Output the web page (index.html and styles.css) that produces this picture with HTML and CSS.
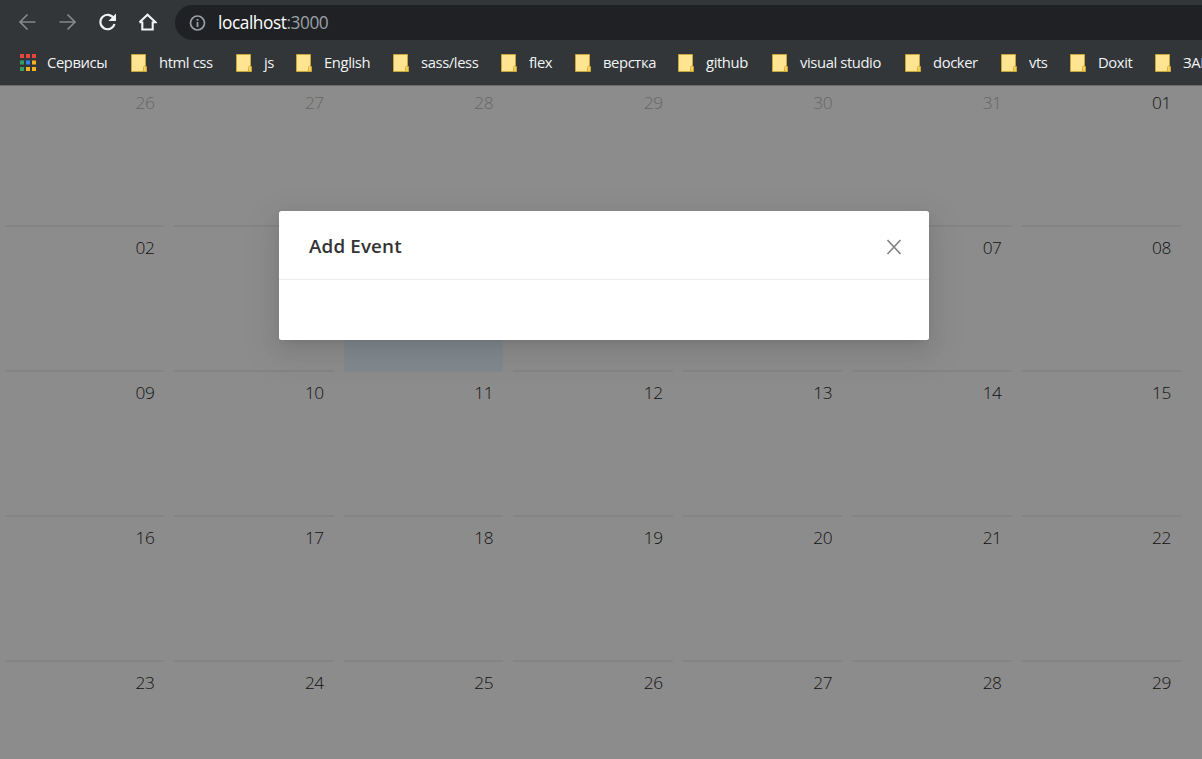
FILE: index.html
```
<!DOCTYPE html>
<html lang="en">
<head>
<meta charset="utf-8">
<title>Calendar</title>
<link rel="stylesheet" href="styles.css">
</head>
<body>
<svg class="defs" width="0" height="0">
  <symbol id="folder" viewBox="0 0 16 18">
    <path d="M.5.5h14v12h1v5H.5z" fill="#ffe591" stroke="#c9a63a"/>
    <path d="M12.500 17v-3.500q0-1.500 1.500-1.500" fill="none" stroke="#d9b13b"/>
    <path d="M13 17v-3l1-1h1v4z" fill="#f5cf5a"/>
  </symbol>
</svg>
<header class="browser">
  <div class="toolbar">
    <svg class="nav" viewBox="0 0 20 20"><path d="M18.500 10H3.500M10.500 2.500 3 10 10.500 17.500" class="dim"/></svg>
    <svg class="nav" viewBox="0 0 20 20"><path d="M2.500 10h15M10.500 2.500 18 10 10.500 17.500" class="dim"/></svg>
    <svg class="nav" viewBox="0 0 20 20"><path d="M16.700 6.200A7.200 7.200 0 1 0 17.500 12" class="bright"/><path d="M19 1.500V9H11.500z" fill="#f1f3f4"/></svg>
    <svg class="nav" viewBox="0 0 20 20"><path d="M5.300 9.500v8h10.400v-8M2.500 10.300 10.500 2.800l8 7.500h-2.800M2.500 10.300h2.800" class="bright"/></svg>
    <div class="address">
      <svg class="info" viewBox="0 0 18 18"><circle cx="8.500" cy="9" r="7" fill="none" stroke="#9aa0a6" stroke-width="1.700"/><path d="M8.500 8v5M8.500 5v1.800" stroke="#9aa0a6" stroke-width="1.800"/></svg>
      <span class="url">localhost<span class="port">:3000</span></span>
    </div>
  </div>
  <nav class="bookmarks">
    <a class="mark"><svg class="apps" viewBox="0 0 16 17"><path d="M0 0h4v4H0zM6 0h4v4H6zM12 0h4v4h-4z" fill="#e8453c"/><path d="M0 6.500h4v4H0zM0 13h4v4H0z" fill="#34a060"/><path d="M6 6.500h4v4H6z" fill="#2a85f0"/><path d="M12 6.500h4v4h-4zM6 13h4v4H6zM12 13h4v4h-4z" fill="#f5b324"/></svg><span>Сервисы</span></a>
    <a class="mark"><svg class="folder"><use href="#folder"/></svg><span>html css</span></a>
    <a class="mark"><svg class="folder"><use href="#folder"/></svg><span>js</span></a>
    <a class="mark"><svg class="folder"><use href="#folder"/></svg><span>English</span></a>
    <a class="mark"><svg class="folder"><use href="#folder"/></svg><span>sass/less</span></a>
    <a class="mark"><svg class="folder"><use href="#folder"/></svg><span>flex</span></a>
    <a class="mark"><svg class="folder"><use href="#folder"/></svg><span>верстка</span></a>
    <a class="mark"><svg class="folder"><use href="#folder"/></svg><span>github</span></a>
    <a class="mark"><svg class="folder"><use href="#folder"/></svg><span>visual studio</span></a>
    <a class="mark"><svg class="folder"><use href="#folder"/></svg><span>docker</span></a>
    <a class="mark"><svg class="folder"><use href="#folder"/></svg><span>vts</span></a>
    <a class="mark"><svg class="folder"><use href="#folder"/></svg><span>Doxit</span></a>
    <a class="mark"><svg class="folder"><use href="#folder"/></svg><span>ЗАК</span></a>
  </nav>
</header>
<main class="page">
  <div class="calendar">
    <div class="day first out">26</div><div class="day first out">27</div><div class="day first out">28</div><div class="day first out">29</div><div class="day first out">30</div><div class="day first out">31</div><div class="day first">01</div>
    <div class="day">02</div><div class="day"></div><div class="day selected"></div><div class="day"></div><div class="day"></div><div class="day">07</div><div class="day">08</div>
    <div class="day">09</div><div class="day">10</div><div class="day no-line">11</div><div class="day">12</div><div class="day">13</div><div class="day">14</div><div class="day">15</div>
    <div class="day">16</div><div class="day">17</div><div class="day">18</div><div class="day">19</div><div class="day">20</div><div class="day">21</div><div class="day">22</div>
    <div class="day">23</div><div class="day">24</div><div class="day">25</div><div class="day">26</div><div class="day">27</div><div class="day">28</div><div class="day">29</div>
  </div>
  <section class="modal">
    <div class="modal-head">
      <h1 class="title">Add Event</h1>
      <svg class="close" viewBox="0 0 16 16"><path d="M1.500 1 14.500 15M14.500 1 1.500 15"/></svg>
    </div>
    <div class="modal-body"></div>
  </section>
</main>
</body>
</html>
```

FILE: styles.css
```
* { box-sizing: border-box; }
body {
  margin: 0;
  height: 759px;
  overflow: hidden;
  display: flex;
  flex-direction: column;
  background: #8c8c8c;
  font-family: "Open Sans", "Noto Sans", sans-serif;
}
.defs { position: absolute; }
.browser {
  flex: none;
  height: 86px;
  background: #323639;
  border-bottom: 1px solid #6b6b6c;
  overflow: hidden;
}
.toolbar {
  height: 40px;
  padding: 5px 0 0 17px;
  display: flex;
  gap: 20px;
}
.nav { flex: none; width: 20px; height: 20px; margin-top: 7px; }
.dim { fill: none; stroke: #85888b; stroke-width: 1.7; }
.bright { fill: none; stroke: #f1f3f4; stroke-width: 2.1; }
.address {
  flex: 1;
  height: 35px;
  margin-left: -2px;
  padding-left: 14px;
  display: flex;
  align-items: center;
  gap: 11px;
  border-radius: 18px 0 0 18px;
  background: #202124;
}
.info { width: 18px; height: 18px; }
.url { color: #fff; font-size: 17.3px; letter-spacing: -0.44px; line-height: 34px; }
.port { color: #9aa0a6; }
.bookmarks {
  height: 45px;
  padding-left: 20px;
  display: grid;
  grid-template-columns: 111px 105px 60px 97px 108px 74px 103px 94px 133px 96px 69px 85px 80px;
  align-items: center;
}
.mark {
  display: flex;
  align-items: center;
  gap: 12px;
  color: #f1f3f4;
  font-size: 14.8px;
  letter-spacing: -0.4px;
  line-height: 20px;
  white-space: nowrap;
}
.mark:first-child { gap: 11px; }
.mark span { padding-bottom: 2px; }
.apps { width: 16px; height: 17px; }
.folder { width: 16px; height: 18px; }
.page { flex: 1; min-height: 0; position: relative; overflow: hidden; }
.calendar {
  width: 1186px;
  display: grid;
  grid-template-columns: repeat(7, 1fr);
  grid-auto-rows: 145px;
  margin-top: -6px;
}
.day {
  margin: 0 5px;
  padding: 10px 10px 0 0;
  border-top: 2px solid #848484;
  color: #111;
  font-size: 17.3px;
  font-weight: 300;
  letter-spacing: -0.4px;
  line-height: 21px;
  text-align: right;
}
.first, .no-line { border-top-color: transparent; }
.out { color: #666; }
.selected { height: 147px; background: #81898f; }
.modal {
  position: absolute;
  left: 279px;
  top: 125px;
  width: 650px;
  height: 129px;
  border-radius: 2.5px;
  background: #fff;
  box-shadow: 0 4px 8px -5px rgba(0,0,0,.12), 0 8px 20px rgba(0,0,0,.08), 0 11px 35px 10px rgba(0,0,0,.05);
}
.modal-head {
  height: 69px;
  padding: 2px 27px 0 30px;
  display: flex;
  align-items: center;
  justify-content: space-between;
  border-bottom: 1px solid #ededed;
}
.title { margin: 0; color: #333; font-size: 18.8px; font-weight: 600; letter-spacing: 0.15px; line-height: 28px; }
.close { width: 16px; height: 16px; margin-top: 2px; fill: none; stroke: #808080; stroke-width: 1.6; }
```
